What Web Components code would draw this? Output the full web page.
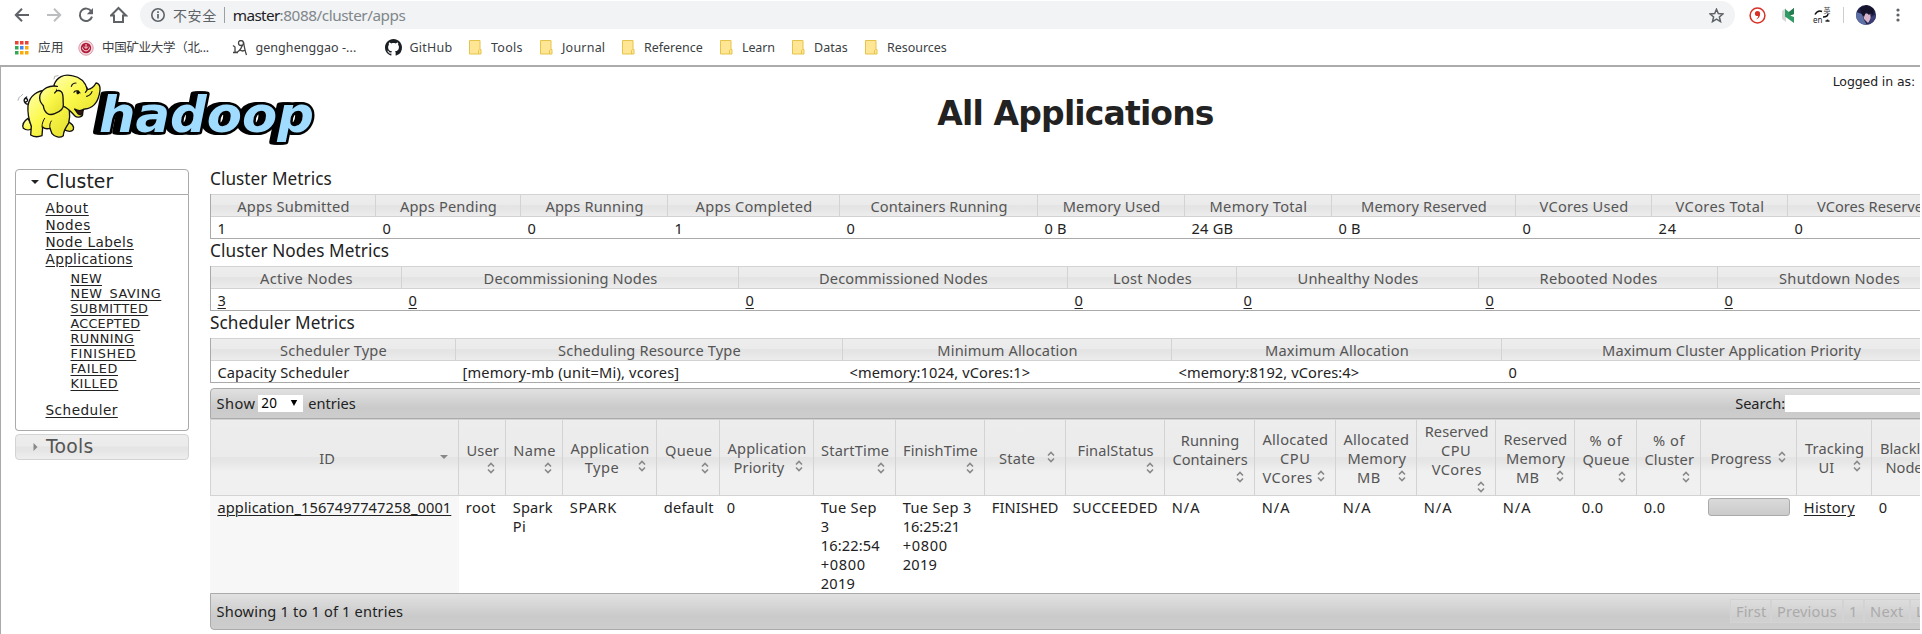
<!DOCTYPE html>
<html lang="zh-CN">
<head>
<meta charset="utf-8">
<title>All Applications</title>
<style>
html,body{margin:0;height:100%;overflow:hidden;background:#fff}
body{font:14.6px/20px "Noto Sans","Noto Sans CJK SC",sans-serif;color:#222}
</style>
</head>
<body>
<yarn-window></yarn-window>
<script>
const define = (name, css, html) => customElements.define(name, class extends HTMLElement {
  connectedCallback() {
    if (this.shadowRoot) return;
    const root = this.attachShadow({mode: 'open'});
    root.innerHTML = `<style>*{box-sizing:border-box}${css}</style>` + (typeof html === 'function' ? html(this) : html);
  }
});
const esc = s => s.replace(/&/g, '&amp;').replace(/</g, '&lt;').replace(/>/g, '&gt;');
const T = (text, w, extra = '') => `<fit-text w="${w}" ${extra}>${esc(text)}</fit-text>`;
const GLASS = 'linear-gradient(#ededed 0,#ebebeb calc(50% - 1px),#e4e4e4 50%,#e5e5e5 calc(50% + 3px),#f0f0f0 calc(50% + 14px),#f0f0f0 100%)';
const BAR = 'linear-gradient(#e1e1e1 0,#cacaca 65%,#cdcdcd 100%)';

/* ---------- browser chrome ---------- */
define('browser-nav', `
:host{display:flex;align-items:center;height:30px;padding-left:14px;background:#fff}
.b{width:32px;height:30px;flex:none;display:flex;align-items:center}
.omni{margin-left:-2px;width:1595px;height:28px;border-radius:14px;background:#f1f3f4;display:flex;align-items:center;padding:0 11px 0 10px;flex:none;color:#5f6368;margin-top:0}
.omni .i{width:23px;height:16px}.omni .s{width:1px;height:16px;background:#9aa0a6;margin:0 8px 0 7px}
.cn{font:14px/20px "Noto Sans CJK SC",sans-serif}
.url{font:15.3px/20px "Noto Sans",sans-serif;color:#80868b}.url b{font-weight:400;color:#202124}
.star{margin-left:auto}
svg{display:block}
.ext{display:grid;grid-template-columns:33px 31px 33px 10px 34px 20px;align-items:center;margin-left:14px}
.sep{width:1px;height:16px;background:#ccc;margin-left:-3px}`, `
<div class="b"><svg width="16" height="16" viewBox="0 0 16 16" fill="none" stroke="#5f6368" stroke-width="2"><path d="M15 8H2.5M8 1.8 1.8 8 8 14.2"/></svg></div>
<div class="b"><svg width="16" height="16" viewBox="0 0 16 16" fill="none" stroke="#bcbec0" stroke-width="2"><path d="M1 8h12.500M8 1.800 14.200 8 8 14.200"/></svg></div>
<div class="b"><svg width="16" height="16" viewBox="0 0 16 16"><path d="M13.400 4.600A6.200 6.200 0 1 0 14 9.600" fill="none" stroke="#5f6368" stroke-width="2"/><path d="M15 1v6.200H8.800z" fill="#5f6368"/></svg></div>
<div class="b"><svg width="18" height="18" viewBox="0 0 18 18" fill="none" stroke="#5f6368" stroke-width="2"><path d="M1 9.500H4V16H13V9.500H16L8.500 2z"/></svg></div>
<div class="omni"><svg class="i" viewBox="0 0 23 16" width="23" height="16"><circle cx="8" cy="8" r="6.200" fill="none" stroke="#5f6368" stroke-width="1.600"/><path d="M8 7v4.500M8 4.200v1.700" stroke="#5f6368" stroke-width="1.700"/></svg>
${T('不安全', 42, 'class="cn"')}<span class="s"></span><span class="url"><b>${T('master', 45)}</b>${T(':8088/cluster/apps', 124)}</span>
<svg class="star" width="15" height="15" viewBox="0 0 15 15"><path d="M7.500 1.200 9.300 5.500 14 5.900 10.400 9 11.500 13.600 7.500 11.100 3.500 13.600 4.600 9 1 5.900 5.700 5.500z" fill="none" stroke="#5f6368" stroke-width="1.500"/></svg></div>
<div class="ext">
<svg width="17" height="17" viewBox="0 0 17 17"><circle cx="8.500" cy="8.500" r="7.400" fill="#fff" stroke="#d93025" stroke-width="1.500"/><circle cx="8.500" cy="6.500" r="2.600" fill="#d93025"/><path d="M11.100 6.300c.2 3-1 5-4 6.200 1.500-1.300 2.200-2.500 2.100-4.200z" fill="#d93025"/></svg>
<svg width="14" height="17" viewBox="0 0 14 17"><path d="M0 4 4 1v14l-4-3z" fill="#d5d8d6"/><path d="M3 2l4 3 5-4v6L8 8.500l4 1.500v6L3 9.500z" fill="#2f9a63"/><path d="M7 5l5-4v6L8 8.500z" fill="#267c50"/></svg>
<svg width="18" height="18" viewBox="0 0 18 18"><path d="M2 8.500C4 5 6 4 9 5.500M15 7.500c0 2-2 3.500-5 3.500" fill="none" stroke="#111" stroke-width="1.500"/><path d="M12.500 15h4M14.500 13.500v2" stroke="#222" stroke-width="1.600"/><text x="0" y="16.500" font-family="Noto Sans" font-size="8" fill="#222">en</text><text x="10.500" y="6.500" font-family="Noto Sans CJK SC" font-size="7" fill="#444">英</text></svg>
<span class="sep"></span>
<svg width="20" height="20" viewBox="0 0 20 20"><defs><clipPath id="c"><circle cx="10" cy="10" r="10"/></clipPath></defs><g clip-path="url(#c)"><path d="M0 0h20v20H0z" fill="#20234b"/><path d="M0 7l6 2 2 6 3 5H0z" fill="#5d70a7"/><path d="M7 9l7-1 1 6-3 4-4-4z" fill="#d8b4ca"/><path d="M4 3l7-3 7 4-1 6-2-2-2 2-3-3-2 5-3-4z" fill="#15132c"/><path d="M15 12l5-3v11h-8z" fill="#3b3d76"/></g></svg>
<svg width="16" height="16" viewBox="0 0 16 16" fill="#5f6368"><circle cx="8" cy="3" r="1.600"/><circle cx="8" cy="8" r="1.600"/><circle cx="8" cy="13" r="1.600"/></svg>
</div>`);

const FOLDER = '<svg width="13" height="15" viewBox="0 0 13 15"><path d="M.5.500h10.500v9h1v4.500H.5z" fill="#ffe694" stroke="#e6c34a"/><path d="M9.500 14v-3.500l1-1" fill="none" stroke="#e6c34a"/></svg>';
const MARKS = [
 ['应用', 24, 23, '<svg width="14" height="14" viewBox="0 0 14 14"><path d="M0 0h3.500v3.500H0zM5 0h3.500v3.500H5zM10 0h3.500v3.500H10z" fill="#ea4335"/><path d="M0 5h3.500v3.500H0z" fill="#34a853"/><path d="M5 5h3.500v3.500H5z" fill="#4285f4"/><path d="M10 5h3.500v3.500H10zM5 10h3.500v3.500H5zM10 10h3.500v3.500H10z" fill="#fbab08"/><path d="M0 10h3.500v3.500H0z" fill="#34a853"/></svg>'],
 ['中国矿业大学（北...', 105, 24, '<svg width="16" height="16" viewBox="0 0 16 16"><circle cx="8" cy="8" r="7.200" fill="#f3dbe0" stroke="#d99ba8" stroke-width="1"/><circle cx="8" cy="8" r="5.200" fill="#b11e3a"/><path d="M4.500 7.500c0 4.500 7 4.500 7 0M8 4v4M6 6.500l2 2 2-2" stroke="#f8dfe5" fill="none"/></svg>'],
 ['genghenggao -...', 99, 23.5, '<svg width="16" height="16" viewBox="0 0 16 16" fill="none" stroke="#444" stroke-width="1.300"><path d="M1 5.500 3 7v5.500C6 12.500 9 9 10.500 5M1 12.500h5"/><circle cx="9" cy="3" r="2.500"/><path d="M11.500 2c.8 5 1.500 9 3 13M8 10c2 1.500 4 1 5.500-.5"/></svg>'],
 ['GitHub', 41, 24.5, '<svg width="17" height="17" viewBox="0 0 16 16"><path fill="#1b1f23" d="M8 0C3.580 0 0 3.580 0 8c0 3.540 2.290 6.530 5.470 7.590.4.070.55-.17.55-.38 0-.19-.01-.82-.01-1.490-2.010.37-2.530-.49-2.690-.94-.09-.23-.48-.94-.82-1.130-.28-.15-.68-.52-.01-.53.63-.01 1.080.58 1.230.82.72 1.210 1.870.87 2.330.66.070-.52.28-.87.51-1.070-1.780-.2-3.640-.89-3.640-3.950 0-.87.31-1.590.82-2.150-.08-.2-.36-1.020.08-2.120 0 0 .67-.21 2.200.82.64-.18 1.320-.27 2-.27s1.360.09 2 .27c1.530-1.040 2.200-.82 2.200-.82.44 1.100.16 1.920.08 2.120.51.56.82 1.270.82 2.150 0 3.070-1.870 3.750-3.650 3.950.29.25.54.73.54 1.480 0 1.070-.01 1.930-.01 2.200 0 .21.15.46.55.38A8.010 8.010 0 0 0 16 8c0-4.420-3.580-8-8-8z"/></svg>'],
 ['Tools', 30, 22, FOLDER], ['Journal', 41.5, 22, FOLDER], ['Reference', 57, 22, FOLDER],
 ['Learn', 31, 22, FOLDER], ['Datas', 32, 22, FOLDER], ['Resources', 58, 22, FOLDER]];
define('bookmark-item', `:host{display:flex;align-items:center;height:35px}i{flex:none;width:var(--o)}svg{display:block}`,
  el => { const m = MARKS[+el.getAttribute('n')]; return `<i style="--o:${m[2]}px">${m[3]}</i>${T(m[0], m[1])}`; });
define('bookmark-bar', `
:host{display:grid;grid-template-columns:63px 154px 153px 84px 71px 82px 98px 72px 73px 100px;height:35px;padding:0 0 1px 15px;background:#fff;font:12.500px/20px "Noto Sans","Noto Sans CJK SC",sans-serif;color:#3c4043}`,
  MARKS.map((m, i) => `<bookmark-item n="${i}"></bookmark-item>`).join(''));

/* ---------- page header ---------- */
define('hadoop-logo', `:host{display:block;width:310px;height:80px}svg{display:block;overflow:visible}
.w{font:italic bold 50px "DejaVu Sans",sans-serif;fill:#9fdcff;stroke:#000;stroke-width:5px;paint-order:stroke;stroke-linejoin:round;filter:drop-shadow(-3px 0 0 #000) drop-shadow(-2px 0 0 #000)}`, `
<svg width="310" height="80" viewBox="0 0 310 80">
<defs><linearGradient id="y" x1="0" y1="0" x2="1" y2="1"><stop offset="0" stop-color="#ffffb0"/><stop offset=".45" stop-color="#fbf94c"/><stop offset="1" stop-color="#e4de2b"/></linearGradient></defs>
<text class="w" x="87" y="60" textLength="215" lengthAdjust="spacingAndGlyphs">hadoop</text>
<g transform="translate(0 -1) scale(.33333)" stroke="#111" stroke-width="4" stroke-linejoin="round" stroke-linecap="round" fill="url(#y)">
<path d="M52 98c-14 6-22-12-8-20M40 82c10 0 8 14-2 10" fill="none" stroke-width="4"/>
<path d="M18 88l4-10M26 76l6-6M126 24l2-8 10-2" fill="none" stroke="#888" stroke-width="2"/>
<path d="M48 142c-12 8-18 20-14 30 8 6 20 6 28 0zM166 150c12 8 22 14 18 26-6 8-20 4-28 0z"/>
<path d="M108 58c-30-2-56 16-60 46-2 24 4 46 10 62l-2 26c10 6 24 6 34 2l2-26c6 6 14 6 22 4l6 16c8 10 24 14 34 6 0-16 10-26 16-38 6-20 2-50-10-80z"/>
<path d="M90 168c0-12 4-20 8-26M114 172c-2-10 0-16 4-22" fill="none" stroke-width="3"/>
<path d="M126 42c8-24 30-34 54-28 24 4 40 18 46 42 14-2 22-12 26-20 14 2 14 20 10 34-6 26-20 42-44 44-4 0-8 4-6 12 2 12-16 16-24 8-14-14-20-24-34-28z"/>
<path d="M188 114c10 6 18 6 26 2-2 14-8 18-16 12z" fill="#3b1410"/>
<path d="M136 46c-24-4-44 6-52 26-4 16 4 26 10 32 2 20 16 32 34 24 16-6 28-14 26-28-2-18 2-30-6-38-8-6-16-4-20 4"/>
<path d="M224 48c4 6 0 12-4 16M186 64c2-6 14-6 18 2M196 60v8M178 46c2-6 8-10 14-10M224 76c8-2 14-8 16-14" fill="none" stroke-width="3.500"/>
<ellipse cx="198" cy="64" rx="4" ry="6" fill="#111" stroke="none"/>
</g></svg>`);
define('page-header', `
:host{display:grid;grid-template-columns:320px 1fr 320px;height:101px;padding:5px 5px 0 11px}
h1{margin:0;justify-self:center;padding:22px 0 0 224px;font:bold 33px/40px "DejaVu Sans",sans-serif;color:#222}
.u{justify-self:end;padding-top:0;font:12.500px/20px "DejaVu Sans",sans-serif}`,
`<hadoop-logo></hadoop-logo><h1>${T('All Applications', 274.5)}</h1><div class="u">${T('Logged in as:', 80.5)}</div>`);

/* ---------- sidebar ---------- */
define('side-nav', `
:host{display:block;width:174px;font:13.600px/17px "DejaVu Sans",sans-serif}
.h{display:flex;align-items:center;height:25px;font-size:18.800px;line-height:24px}
.h svg{width:16px;height:16px;margin:0 3px 0 11px;flex:none}
.open{border:1px solid #aaa;border-radius:4px 4px 0 0;height:26px;color:#212121}
.body{border:1px solid #aaa;border-top:0;border-radius:0 0 4px 4px;height:236px;padding:5px 0 0 29.500px;display:flex;flex-direction:column;align-items:flex-start}
.shut{margin-top:3px;border:1px solid #d3d3d3;border-radius:4px;height:26px;background:${GLASS};color:#555}
a{display:block;height:17px;color:#222}
a fit-text{text-decoration:underline;text-underline-offset:2px;text-decoration-thickness:1px}
.sub{font-size:12.800px;line-height:15px;padding:3px 0 0 25px;margin-bottom:11px}.sub a{height:15px}`, `
<div class="h open"><svg viewBox="0 0 16 16"><path d="M4 6.500h8L8 10.500z" fill="#222" transform="translate(0 -.5)"/></svg>${T('Cluster', 65.5)}</div>
<div class="body"><a>${T('About', 41.5)}</a><a>${T('Nodes', 43.5)}</a><a>${T('Node Labels', 86.5)}</a><a>${T('Applications', 85.5)}</a>
<div class="sub">${[['NEW', 29.7], ['NEW_SAVING', 89], ['SUBMITTED', 76], ['ACCEPTED', 68], ['RUNNING', 62], ['FINISHED', 64], ['FAILED', 45.7], ['KILLED', 46]].map(a => `<a>${T(...a)}</a>`).join('')}</div>
<a>${T('Scheduler', 70.500)}</a></div>
<div class="h shut"><svg viewBox="0 0 16 16"><path d="M6.500 4v8l4-4z" fill="#888"/></svg>${T('Tools', 45.7)}</div>`);

/* ---------- metrics tables ---------- */
const METRICS = {
 cluster: {title: ['Cluster Metrics', 120], cols: [166,145,147,172,198,147,147,184,136,136,173],
  head: [['Apps Submitted',110.6],['Apps Pending',95.3],['Apps Running',96.4],['Apps Completed',115],['Containers Running',135],['Memory Used',95.7],['Memory Total',96],['Memory Reserved',124],['VCores Used',87],['VCores Total',87],['VCores Reserved',113]],
  row: [['1',6],['0',8],['0',8],['1',6],['0',8],['0 B',20.5],['24 GB',40],['0 B',20.5],['0',8],['24',16.5],['0',8]]},
 nodes: {link: 1, title: ['Cluster Nodes Metrics', 177.3], cols: [192,337,329,169,242,239,243],
  head: [['Active Nodes',91],['Decommissioning Nodes',172],['Decommissioned Nodes',167],['Lost Nodes',77],['Unhealthy Nodes',119],['Rebooted Nodes',116],['Shutdown Nodes',119]],
  row: [['3',8],['0',8],['0',8],['0',8],['0',8],['0',8],['0',8]]},
 sched: {title: ['Scheduler Metrics', 143], cols: [246,387,329,330,459],
  head: [['Scheduler Type',105],['Scheduling Resource Type',181],['Minimum Allocation',138.5],['Maximum Allocation',142],['Maximum Cluster Application Priority',257]],
  row: [['Capacity Scheduler',130],['[memory-mb (unit=Mi), vcores]',215],['<memory:1024, vCores:1>',179],['<memory:8192, vCores:4>',179],['0',8]]}
};
define('metrics-table', `
:host{display:block;width:1751px}
h3{margin:0;height:27px;font:400 17.200px/24px "Noto Sans",sans-serif;color:#222}
.g{display:grid;height:45px;grid-template-rows:23px 22px;border-left:1px solid #aaa}
.th{border:1px solid #d3d3d3;border-left:0;background:${GLASS};color:#555;text-align:center;line-height:21px;padding:1px 0 0 1px}
.td{border-bottom:1px solid #aaa;line-height:21px;padding:1px 0 0 6.500px}
.u{text-decoration:underline;text-decoration-thickness:1px;text-underline-offset:2px}`,
 el => { const m = METRICS[el.getAttribute('kind')];
  return `<h3>${T(...m.title)}</h3><div class="g" style="grid-template-columns:${m.cols.map((c, i) => c - (i ? 0 : 1) + 'px').join(' ')}">` +
   m.head.map(h => `<div class="th">${T(...h)}</div>`).join('') +
   m.row.map(h => `<div class="td">${T(h[0], h[1], m.link ? 'class="u"' : '')}</div>`).join('') + '</div>'; });

/* ---------- applications table ---------- */
/* column: left edge, header lines [text, width, ink x], first line centre y, sort icon x/y, cell lines */
const COLS = [
 [209, [['ID',13.8,318.8]], 458.7, [442.4,457], [['application_1567497747258_0001',232]]],
 [458, [['User',30.6,467.1]], 451, [490.5,468], [['root',28.3]]],
 [505, [['Name',41,513.8]], 451, [547.5,468], [['Spark',38],['Pi',11.5]]],
 [562, [['Application',77,571.2],['Type',32.5,585.4]], 449, [641.6,466.3], [['SPARK',45.5]]],
 [656, [['Queue',45.2,665.7]], 451, [704.4,468], [['default',48]]],
 [719, [['Application',77.2,728.1],['Priority',49,734.2]], 449, [798.4,466.3], [['0',8]]],
 [813, [['StartTime',66.2,821.7]], 451, [880.6,468], [['Tue Sep',54.3],['3',7],['16:22:54',57],['+0800',43],['2019',32.5]]],
 [895, [['FinishTime',73.1,903.6]], 451, [969.4,468], [['Tue Sep 3',67],['16:25:21',55.5],['+0800',43],['2019',32.5]]],
 [984, [['State',34.4,999.7]], 458.7, [1050.6,457], [['FINISHED',65]]],
 [1065, [['FinalStatus',74.3,1078.1]], 451, [1149.7,468], [['SUCCEEDED',83.4]]],
 [1164, [['Running',56.7,1181.4],['Containers',73.5,1173]], 441, [1239.6,477], [['N/A',27]]],
 [1254, [['Allocated',64.2,1263],['CPU',28.6,1280.6],['VCores',48.6,1263]], 440, [1320.4,476], [['N/A',27]]],
 [1335, [['Allocated',64,1344],['Memory',57,1348],['MB',22,1357.5]], 440, [1401.7,476], [['N/A',27]]],
 [1416, [['Reserved',62,1425.3],['CPU',28.5,1441.5],['VCores',48.3,1432.3]], 432, [1480.6,487], [['N/A',27]]],
 [1495, [['Reserved',62,1504.2],['Memory',57.4,1506.6],['MB',21.8,1516.5]], 440, [1559.4,476], [['N/A',27]]],
 [1574, [['% of',31.4,1590],['Queue',45.5,1583]], 441, [1621.4,477], [['0.0',20]]],
 [1636, [['% of',30.6,1653.5],['Cluster',48,1645]], 441, [1685.5,477], [['0.0',20]]],
 [1700, [['Progress',59.2,1711.2]], 458.7, [1781.6,457], null],
 [1796, [['Tracking',57.4,1805.6],['UI',14.4,1819]], 449, [1856.6,466.3], [['History',49.3]]],
 [1871, [['Blacklisted',72,1880.6],['Nodes',42,1886.2]], 449, [1950,466.3], [['0',8]]],
 [1960]];
define('sort-header', `
:host{display:grid;grid-template:75px/1fr;border:1px solid #d3d3d3;border-left:0;height:77px;background:${GLASS};color:#555;line-height:19px;overflow:hidden}
:host>*,.t,svg{grid-area:1/1}.l{height:19px;white-space:nowrap}
svg{width:10px;height:12px}`,
 el => { const c = COLS[+el.getAttribute('n')], id = el.getAttribute('n') === '0';
  return `<div class="t" style="padding-top:${Math.round(c[2] - 430.2)}px">${c[1].map(l => `<div class="l" style="padding-left:${(l[2] - c[0] - 1.6).toFixed(1)}px">${T(l[0], l[1])}</div>`).join('')}</div>
  <svg viewBox="0 0 10 12" style="margin:${Math.round(c[3][1] - 426)}px 0 0 ${Math.round(c[3][0] - c[0] - 5.500)}px">${id ? '<path d="M1 4h8L5 8z" fill="#888"/>' : '<path d="M2 4.500 5 1.500 8 4.500M2 7.500 5 10.500 8 7.500" fill="none" stroke="#888" stroke-width="1.600"/>'}</svg>`; });
define('app-cell', `
:host{display:block;height:97px;padding:2px 0 0 6.800px;line-height:19px;white-space:nowrap}
:host([n="0"]){background:#f7f7f7;padding-left:7.500px}
:host([n="0"]) fit-text,:host([n="18"]) fit-text{text-decoration:underline;text-decoration-thickness:1px;text-underline-offset:2px}
.p{width:82px;height:18px;border:1px solid #aaa;border-radius:3px;background:linear-gradient(#dadada,#cbcbcb)}`,
 el => { const v = COLS[+el.getAttribute('n')][4]; return v ? v.map(l => `<div>${T(...l)}</div>`).join('') : '<div class="p"></div>'; });
define('data-bar', `:host{display:flex;align-items:center;border:1px solid #aaa;background:${BAR};padding:0 0 1px 5.500px;line-height:20px}`, '<slot></slot>');
define('page-button', `:host{display:flex;align-items:center;height:24px;border:1px solid #d3d3d3;color:#aaa;padding-left:5px;background:rgba(230,230,230,.2);box-sizing:border-box;white-space:nowrap}`, '<slot></slot>');
define('data-table', `
:host{display:block;width:1751px}
.top{height:31px;border-radius:4px 4px 0 0}.bot{height:37px;border-radius:0 0 4px 4px}
.g{display:grid;grid-template-columns:${COLS.slice(0, -1).map((c, i) => COLS[i + 1][0] - c[0] + 'px').join(' ')}}
.sel{display:flex;align-items:center;justify-content:space-between;width:45px;height:17px;background:#fff;margin:0 5px 0 3px;padding:0 5px 0 3px;color:#000;line-height:17px;font-size:13.500px}
.sel svg{width:8px;height:8px}
.search{margin-left:auto;display:flex;align-items:center}.in{width:175px;height:17px;background:#fff}
.pg{margin-left:auto;display:grid;grid-template-columns:41px 72px 21px 46px 50px}
sort-header[n="0"]{border-left:1px solid #d3d3d3}`, `
<data-bar class="top">${T('Show', 37)}<span class="sel">${T('20', 14)}<svg viewBox="0 0 8 8"><path d="M.8 1h6.400L4 7z"/></svg></span>${T('entries', 45.500)}<span class="search">${T('Search:', 48)}<span class="in"></span></span></data-bar>
<div class="g">${COLS.slice(0, -1).map((c, i) => `<sort-header n="${i}"></sort-header>`).join('')}${COLS.slice(0, -1).map((c, i) => `<app-cell n="${i}"></app-cell>`).join('')}</div>
<data-bar class="bot">${T('Showing 1 to 1 of 1 entries', 185)}<span class="pg"><page-button>${T('First', 28.500)}</page-button><page-button>${T('Previous', 58)}</page-button><page-button>${T('1', 6)}</page-button><page-button>${T('Next', 32)}</page-button><page-button>${T('Last', 26)}</page-button></span></data-bar>`);

define('yarn-window', `
:host{display:block;width:1922px;height:634px;overflow:hidden;background:#fff}
.view{width:1920px;height:569px;border-top:2px solid #ababab;border-left:1px solid #aaa;overflow:hidden}
.cols{display:grid;grid-template-columns:174px 1751px;column-gap:21px;padding-left:14px}
side-nav{padding-top:1px}data-table{margin-top:5px}`, `
<browser-nav></browser-nav><bookmark-bar></bookmark-bar>
<div class="view"><page-header></page-header>
<div class="cols"><side-nav></side-nav><main style="margin-top:-1px"><metrics-table kind="cluster"></metrics-table><metrics-table kind="nodes"></metrics-table><metrics-table kind="sched"></metrics-table><data-table></data-table></main></div></div>`);

/* text run whose tracking is tuned so that its ink spans the requested width */
customElements.define('fit-text', class extends HTMLElement {
  connectedCallback() {
    if (this.shadowRoot) return;
    this.attachShadow({mode: 'open'}).innerHTML = '<style>:host{display:inline-block;white-space:pre;vertical-align:top}</style><slot></slot>';
    const n = [...this.textContent].length;
    const natural = this.getBoundingClientRect().width;
    if (n > 1) this.style.letterSpacing = ((+this.getAttribute('w') + 1.8 - natural) / n).toFixed(3) + 'px';
  }
});
</script>
</body>
</html>
